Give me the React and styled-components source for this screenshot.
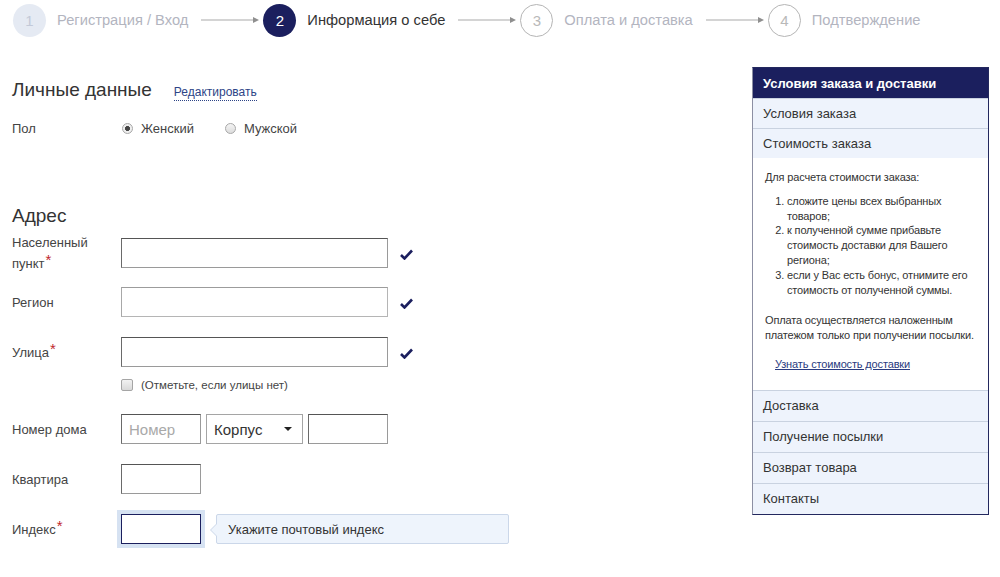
import React from 'react';
import styled, { createGlobalStyle } from 'styled-components';

const GlobalStyle = createGlobalStyle`
  body {
    margin: 0;
    background: #fff;
    font-family: "Liberation Sans", Arial, sans-serif;
    color: #333;
  }
`;

const NAVY = '#1b1f5e';

const steps = [
  { n: 1, title: 'Регистрация / Вход', state: 'done' },
  { n: 2, title: 'Информация о себе', state: 'current' },
  { n: 3, title: 'Оплата и доставка', state: 'next' },
  { n: 4, title: 'Подтверждение', state: 'next' },
];

const Arrow = () => (
  <ArrowBox>
    <svg width="58" height="8" viewBox="0 0 58 8">
      <line x1="0" y1="4" x2="53" y2="4" stroke="#a9a9a9" strokeWidth="1" />
      <path d="M52 1 L58 4 L52 7 Z" fill="#8f8f8f" />
    </svg>
  </ArrowBox>
);

const Check = () => (
  <CheckMark>
    <svg width="13" height="11" viewBox="0 0 13 11">
      <path d="M1 6 L4.5 9.5 L12 1.5" fill="none" stroke={NAVY} strokeWidth="2.6" />
    </svg>
  </CheckMark>
);

const App = () => {
  return (
    <Page>
      <GlobalStyle />
      <Stepper>
        {steps.map((s, i) => (
          <React.Fragment key={s.n}>
            <Step>
              <Circle $state={s.state}>{s.n}</Circle>
              <StepTitle $state={s.state}>{s.title}</StepTitle>
            </Step>
            {i < steps.length - 1 && <Arrow />}
          </React.Fragment>
        ))}
      </Stepper>

      <Main>
        <FormColumn>
          <SectionHead $top={39}>
            <Heading>Личные данные</Heading>
            <EditLink>Редактировать</EditLink>
          </SectionHead>

          <Row $top={17}>
            <Label>Пол</Label>
            <RadioGroup>
              <RadioItem>
                <Radio $checked />
                Женский
              </RadioItem>
              <RadioItem>
                <Radio />
                Мужской
              </RadioItem>
            </RadioGroup>
          </Row>

          <SectionHead $top={66}>
            <Heading>Адрес</Heading>
          </SectionHead>

          <Row $top={5}>
            <Label>
              Населенный
              <br />
              пункт<Req>*</Req>
            </Label>
            <Input $w={267} />
            <Check />
          </Row>

          <Row $top={13}>
            <Label>Регион</Label>
            <Input $w={267} $light />
            <Check />
          </Row>

          <Row $top={20}>
            <Label>
              Улица<Req>*</Req>
            </Label>
            <Input $w={267} />
            <Check />
          </Row>

          <Row $top={11}>
            <Label />
            <CheckItem>
              <CheckBox />
              (Отметьте, если улицы нет)
            </CheckItem>
          </Row>

          <Row $top={22}>
            <Label>Номер дома</Label>
            <Inline>
              <Input $w={80} $placeholder>Номер</Input>
              <Select>
                Корпус
                <Caret />
              </Select>
              <Input $w={80} />
            </Inline>
          </Row>

          <Row $top={20}>
            <Label>Квартира</Label>
            <Input $w={80} />
          </Row>

          <Row $top={20}>
            <Label>
              Индекс<Req>*</Req>
            </Label>
            <Inline>
              <Input $w={80} $focus />
              <Hint>Укажите почтовый индекс</Hint>
            </Inline>
          </Row>
        </FormColumn>

        <Sidebar>
          <SideHeader>Условия заказа и доставки</SideHeader>
          <SideItem>Условия заказа</SideItem>
          <SideItem>Стоимость заказа</SideItem>
          <SideContent>
            <p>Для расчета стоимости заказа:</p>
            <ol>
              <li>сложите цены всех выбранных товаров;</li>
              <li>к полученной сумме прибавьте стоимость доставки для Вашего региона;</li>
              <li>если у Вас есть бонус, отнимите его стоимость от полученной суммы.</li>
            </ol>
            <Note>Оплата осуществляется наложенным платежом только при получении посылки.</Note>
            <SideLink>Узнать стоимость доставки</SideLink>
          </SideContent>
          <SideItem $tall>Доставка</SideItem>
          <SideItem $tall>Получение посылки</SideItem>
          <SideItem $tall>Возврат товара</SideItem>
          <SideItem $tall>Контакты</SideItem>
        </Sidebar>
      </Main>
    </Page>
  );
};

export default App;

const Page = styled.div`
  width: 1000px;
  height: 577px;
  overflow: hidden;
  box-sizing: border-box;
  padding: 0 11px 0 12px;
`;

const Stepper = styled.div`
  display: flex;
  align-items: center;
  height: 40px;
  padding-left: 1px;
`;

const Step = styled.div`
  display: flex;
  align-items: center;
  gap: 11px;
`;

const Circle = styled.div`
  width: 33px;
  height: 33px;
  box-sizing: border-box;
  border-radius: 50%;
  display: flex;
  align-items: center;
  justify-content: center;
  font-size: 15px;
  background: ${p => (p.$state === 'done' ? '#e5eaf3' : p.$state === 'current' ? '#1b1f5e' : '#fff')};
  color: ${p => (p.$state === 'done' ? '#c3c9d8' : p.$state === 'current' ? '#fff' : '#b9b9b9')};
  border: ${p => (p.$state === 'next' ? '1px solid #b5b5b5' : 'none')};
`;

const StepTitle = styled.span`
  font-size: 14.7px;
  color: ${p => (p.$state === 'current' ? '#333' : '#b3b5bf')};
`;

const ArrowBox = styled.div`
  display: flex;
  margin: 0 4px 0 13px;
`;

const Main = styled.div`
  display: flex;
  justify-content: space-between;
  align-items: flex-start;
`;

const FormColumn = styled.div`
  display: flex;
  flex-direction: column;
  width: 700px;
`;

const SectionHead = styled.div`
  display: flex;
  align-items: baseline;
  gap: 22px;
  margin-top: ${p => p.$top}px;
`;

const Heading = styled.h2`
  margin: 0;
  font-size: 19px;
  line-height: 22px;
  font-weight: normal;
  color: #333;
`;

const EditLink = styled.a`
  font-size: 12px;
  color: #2d4486;
  border-bottom: 1px dotted #2d4486;
  line-height: 15px;
  cursor: pointer;
`;

const Row = styled.div`
  display: flex;
  align-items: center;
  margin-top: ${p => p.$top}px;
  min-height: 14px;
`;

const Label = styled.div`
  width: 109px;
  flex-shrink: 0;
  font-size: 13px;
  line-height: 21px;
  color: #444;
`;

const Req = styled.sup`
  color: #c0272d;
  font-size: 15px;
  line-height: 0;
  vertical-align: 3px;
  margin-left: 1px;
`;

const RadioGroup = styled.div`
  display: flex;
  gap: 30px;
  font-size: 13px;
  line-height: 18px;
  color: #444;
`;

const RadioItem = styled.label`
  display: flex;
  align-items: center;
  gap: 8px;
  padding-left: 1px;
`;

const Radio = styled.span`
  width: 11px;
  height: 11px;
  box-sizing: border-box;
  border-radius: 50%;
  border: 1px solid #a8a8a8;
  background: ${p => (p.$checked ? 'radial-gradient(circle, #444 0 2.2px, #eee 2.8px)' : 'linear-gradient(#f4f4f4, #dcdcdc)')};
`;

const Input = styled.div`
  width: ${p => p.$w}px;
  height: 30px;
  box-sizing: border-box;
  border: 1px solid ${p => (p.$focus ? '#1b1f5e' : p.$light ? '#b5b5b5' : '#9a9a9a')};
  border-top-color: ${p => (p.$focus ? '#1b1f5e' : p.$light ? '#9c9c9c' : '#555')};
  border-left-color: ${p => (p.$focus ? '#1b1f5e' : p.$light ? '#a8a8a8' : '#6a6a6a')};
  box-shadow: ${p => (p.$focus ? '0 0 0 4px #d6e2f2' : 'none')};
  background: #fff;
  font-size: 15px;
  color: #a9a9a9;
  padding-left: 7px;
  display: flex;
  align-items: center;
`;

const CheckMark = styled.div`
  display: flex;
  margin-left: 12px;
  margin-top: 3px;
`;

const CheckItem = styled.label`
  display: flex;
  align-items: center;
  gap: 8px;
  font-size: 11.5px;
  color: #444;
`;

const CheckBox = styled.span`
  width: 12px;
  height: 12px;
  box-sizing: border-box;
  border: 1px solid #a5a5a5;
  border-radius: 2px;
  background: linear-gradient(#f2f2f2, #d9d9d9);
`;

const Inline = styled.div`
  display: flex;
  align-items: center;
  gap: 5px;
`;

const Select = styled.div`
  width: 97px;
  height: 30px;
  box-sizing: border-box;
  border: 1px solid #a5a5a5;
  padding: 0 10px 0 7px;
  display: flex;
  align-items: center;
  justify-content: space-between;
  font-size: 15px;
  color: #333;
`;

const Caret = styled.span`
  width: 0;
  height: 0;
  border-left: 4px solid transparent;
  border-right: 4px solid transparent;
  border-top: 4px solid #222;
`;

const Hint = styled.div`
  position: relative;
  margin-left: 10px;
  width: 293px;
  height: 30px;
  box-sizing: border-box;
  background: #eef4fc;
  border: 1px solid #cbd7e9;
  border-radius: 2px;
  font-size: 13px;
  color: #333;
  padding-left: 11px;
  display: flex;
  align-items: center;

  &::before {
    content: '';
    position: absolute;
    left: -7px;
    top: 8px;
    width: 0;
    height: 0;
    border-top: 7px solid transparent;
    border-bottom: 7px solid transparent;
    border-right: 7px solid #cbd7e9;
  }
  &::after {
    content: '';
    position: absolute;
    left: -6px;
    top: 9px;
    width: 0;
    height: 0;
    border-top: 6px solid transparent;
    border-bottom: 6px solid transparent;
    border-right: 6px solid #eef4fc;
  }
`;

const Sidebar = styled.aside`
  width: 237px;
  margin-top: 27px;
  box-sizing: border-box;
  border: 1px solid #23285e;
  border-left-color: #8c8fa3;
  display: flex;
  flex-direction: column;
`;

const SideHeader = styled.div`
  height: 30px;
  background: ${NAVY};
  color: #fff;
  font-weight: bold;
  font-size: 13px;
  padding-left: 10px;
  display: flex;
  align-items: center;
`;

const SideItem = styled.div`
  height: ${p => (p.$tall ? 31 : 30)}px;
  box-sizing: border-box;
  background: #eef3fc;
  border-top: 1px solid #c9d2e0;
  font-size: 13px;
  color: #333;
  padding-left: 10px;
  display: flex;
  align-items: center;
`;

const SideContent = styled.div`
  background: #fff;
  padding: 12px 2px 18px 12px;
  font-size: 11px;
  line-height: 14.8px;
  letter-spacing: -0.15px;
  color: #333;

  p {
    margin: 0;
  }
  ol {
    margin: 9px 0 0;
    padding-left: 22px;
  }
`;

const Note = styled.p`
  && {
    margin-top: 16px;
  }
`;

const SideLink = styled.a`
  display: inline-block;
  margin: 14px 0 0 10px;
  color: #2a3b80;
  text-decoration: underline;
  cursor: pointer;
`;
